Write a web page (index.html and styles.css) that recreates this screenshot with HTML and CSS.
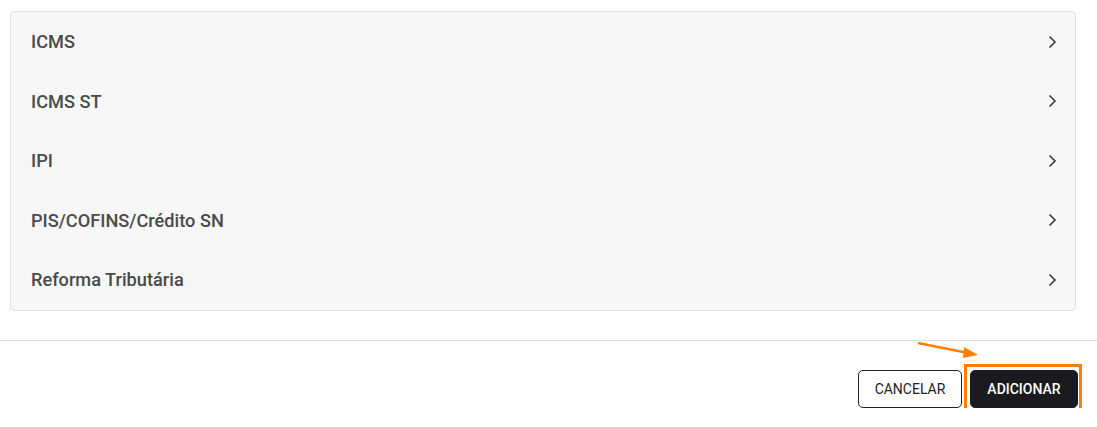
FILE: index.html
```html
<!DOCTYPE html>
<html lang="pt-BR">
<head>
  <meta charset="UTF-8">
  <title>Tributação</title>
  <link rel="stylesheet" href="styles.css">
</head>
<body>
  <!-- Lista de grupos de impostos -->
  <div class="tax-list">
    <div class="tax-row">
      <span>ICMS</span>
      <svg class="chevron" width="18" height="18" viewBox="0 0 18 18"><path d="M6.5 3.5 L12 9 L6.5 14.5" /></svg>
    </div>
    <div class="tax-row">
      <span>ICMS ST</span>
      <svg class="chevron" width="18" height="18" viewBox="0 0 18 18"><path d="M6.5 3.5 L12 9 L6.5 14.5" /></svg>
    </div>
    <div class="tax-row">
      <span>IPI</span>
      <svg class="chevron" width="18" height="18" viewBox="0 0 18 18"><path d="M6.5 3.5 L12 9 L6.5 14.5" /></svg>
    </div>
    <div class="tax-row">
      <span>PIS/COFINS/Crédito SN</span>
      <svg class="chevron" width="18" height="18" viewBox="0 0 18 18"><path d="M6.5 3.5 L12 9 L6.5 14.5" /></svg>
    </div>
    <div class="tax-row">
      <span>Reforma Tributária</span>
      <svg class="chevron" width="18" height="18" viewBox="0 0 18 18"><path d="M6.5 3.5 L12 9 L6.5 14.5" /></svg>
    </div>
  </div>

  <!-- Rodapé com ações -->
  <div class="footer">
    <button class="btn btn-outline">CANCELAR</button>
    <button class="btn btn-dark">ADICIONAR</button>

    <!-- Anotação: seta + destaque -->
    <svg class="annot-arrow" width="80" height="24" viewBox="0 0 80 24">
      <line x1="8" y1="2" x2="58" y2="12" stroke="#ff8000" stroke-width="2.5"/>
      <polygon points="68,14 54,6 53,17" fill="#ff8000"/>
    </svg>
    <div class="annot-box"></div>
  </div>
</body>
</html>
```

FILE: styles.css
```css
body {
  margin: 0;
  background: #fff;
  font-family: Roboto, "Noto Sans", Arial, sans-serif;
}
.tax-list {
  margin: 11px 21px 0 10px;
  background: #f7f7f7;
  border: 1px solid #e2e2e2;
  border-radius: 4px;
}
.tax-row {
  display: flex;
  align-items: center;
  justify-content: space-between;
  height: 59.5px;
  padding: 0 14px 0 20px;
  font-size: 18.2px;
  font-weight: 500;
  color: #4a4a4a;
}
.chevron path {
  fill: none;
  stroke: #3a3a3a;
  stroke-width: 1.6;
}
.footer {
  position: relative;
  display: flex;
  justify-content: flex-end;
  gap: 8px;
  margin-top: 29px;
  border-top: 1px solid #e0e0e0;
  padding: 29px 19px 0 0;
}
.btn {
  height: 38px;
  border-radius: 5px;
  font-family: Roboto, "Noto Sans", Arial, sans-serif;
  font-size: 14px;
  cursor: pointer;
}
.btn-outline {
  width: 104px;
  background: #fff;
  border: 1px solid #222;
  color: #222;
}
.btn-dark {
  width: 108px;
  background: #1b1a1f;
  border: 1px solid #1b1a1f;
  color: #fff;
  font-weight: 500;
}
/* annotation overlay */
.annot-arrow {
  position: absolute;
  left: 910px;
  top: 0;
}
.annot-box {
  position: absolute;
  left: 964px;
  top: 23px;
  width: 112px;
  height: 42px;
  border: 3px solid #ff8000;
}
```
